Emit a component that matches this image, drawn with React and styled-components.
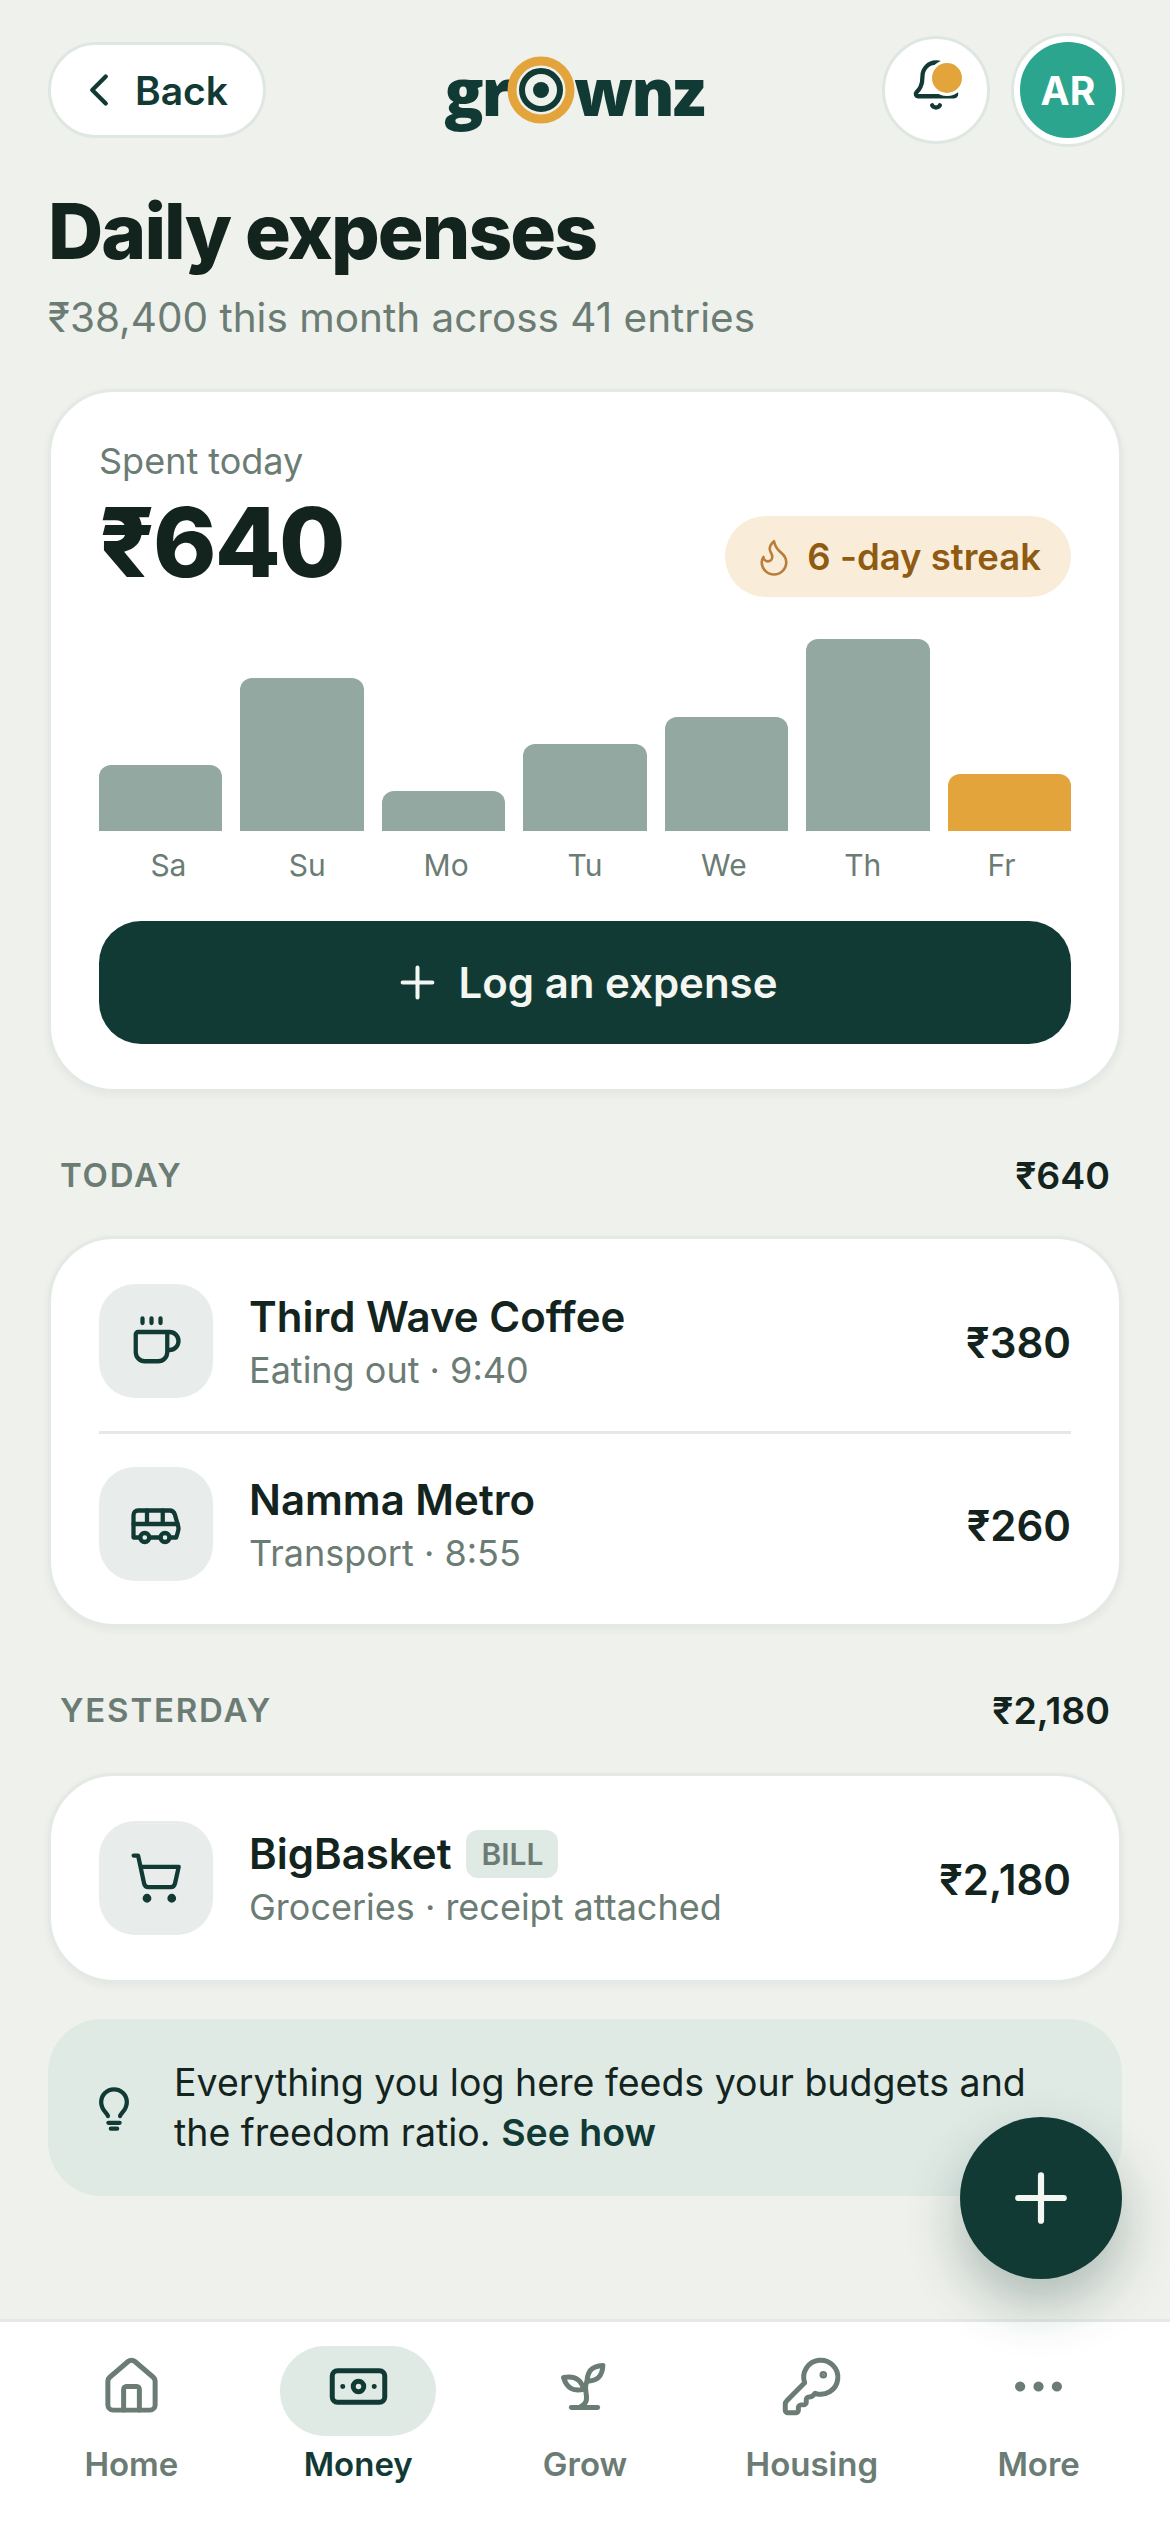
import React from "react";
import styled, { createGlobalStyle } from "styled-components";

const INK = "#13241e";
const PINE = "#123a35";
const MUTED = "#6b7c74";
const LINE = "#e4e9e5";
const MIST = "#e0eae5";

const GlobalStyle = createGlobalStyle`
  html, body {
    margin: 0;
    padding: 0;
    background: #eff1ec;
  }
  * { box-sizing: border-box; }
  body {
    font-family: Inter, "Noto Sans", sans-serif;
    color: ${INK};
  }
`;

const Svg = styled.svg`
  width: ${(p) => p.$size}px;
  height: ${(p) => p.$size}px;
  flex: none;
  display: block;
  fill: none;
  stroke: ${(p) => p.$color || PINE};
  stroke-width: ${(p) => p.$stroke || 1.9};
  stroke-linecap: round;
  stroke-linejoin: round;
`;

const Icon = ({ size, color, stroke, children }) => (
  <Svg viewBox="0 0 24 24" $size={size} $color={color} $stroke={stroke}>
    {children}
  </Svg>
);

const Page = styled.div`
  position: relative;
  width: 1170px;
  height: 2532px;
  overflow: hidden;
  display: flex;
  flex-direction: column;
`;

const Main = styled.main`
  flex: 1;
  padding: 36px 48px 0;
`;

const Header = styled.header`
  display: flex;
  align-items: center;
  justify-content: space-between;
  height: 108px;
`;

const BackButton = styled.button`
  height: 96px;
  width: 218px;
  padding: 0 0 0 21px;
  display: flex;
  align-items: center;
  gap: 9px;
  background: #fff;
  border: 3px solid #dfe7e2;
  border-radius: 48px;
  font: 600 39px Inter, sans-serif;
  color: ${PINE};
`;

const Logo = styled.div`
  display: flex;
  align-items: center;
  font: 800 65px/1 "Open Sans", sans-serif;
  letter-spacing: -2px;
  color: ${PINE};
  margin-top: 2px;
`;

const LogoRing = styled.svg`
  width: 68px;
  height: 68px;
  margin: -2px -1px 0 -3px;
  position: relative;
`;

const HeaderActions = styled.div`
  display: flex;
  align-items: center;
  gap: 24px;
`;

const BellButton = styled.div`
  position: relative;
  width: 108px;
  height: 108px;
  border-radius: 50%;
  background: #fff;
  border: 3px solid #dfe7e2;
  display: flex;
  align-items: center;
  justify-content: center;

  svg {
    margin-bottom: 11px;
  }
`;

const BellDot = styled.span`
  position: absolute;
  left: 47px;
  top: 24px;
  width: 30px;
  height: 30px;
  border-radius: 50%;
  background: #e4a43c;
  box-shadow: 0 0 0 3px #fff;
`;

const Avatar = styled.div`
  width: 108px;
  height: 108px;
  border-radius: 50%;
  background: #2ca58f;
  border: 6px solid #fff;
  box-shadow: 0 0 0 3px #dfe7e2;
  display: flex;
  align-items: center;
  justify-content: center;
  color: #fff;
  font-size: 39px;
  font-weight: 700;
`;

const Title = styled.h1`
  margin: 42px 0 0;
  font-size: 76.5px;
  line-height: 90px;
  font-weight: 800;
  letter-spacing: -1.95px;
  color: ${INK};
`;

const Subtitle = styled.p`
  margin: 15px 0 0;
  font-size: 40.5px;
  line-height: 54px;
  color: ${MUTED};
`;

const Card = styled.section`
  background: #fff;
  border: 3px solid ${LINE};
  border-radius: 66px;
  box-shadow: 0 3px 9px rgba(19, 36, 30, 0.05);
`;

const SpendCard = styled(Card)`
  margin-top: 44px;
  padding: 45px 48px 45px;
`;

const SpentLabel = styled.div`
  font-size: 36px;
  line-height: 48px;
  color: ${MUTED};
`;

const SpentRow = styled.div`
  display: flex;
  align-items: flex-end;
  justify-content: space-between;
  margin-top: 9px;
`;

const SpentValue = styled.div`
  font-size: 96px;
  line-height: 96px;
  font-weight: 800;
  letter-spacing: -1.9px;
  color: ${INK};
`;

const StreakPill = styled.div`
  height: 81px;
  padding: 0 30px 0 28px;
  margin-bottom: -7px;
  display: flex;
  align-items: center;
  gap: 12px;
  border-radius: 41px;
  background: #f9edd9;
  color: #8f5a12;
  font-size: 36.5px;
  font-weight: 600;
  white-space: pre;
`;

const Bars = styled.div`
  margin-top: 49px;
  height: 192px;
  display: flex;
  align-items: flex-end;
  gap: 18px;
`;

const Bar = styled.div`
  flex: 1;
  height: ${(p) => p.$h}px;
  border-radius: 12px 12px 0 0;
  background: ${(p) => (p.$today ? "#e4a43c" : "#94a8a2")};
`;

const DayLabels = styled.div`
  display: flex;
  margin-top: 15px;
`;

const DayLabel = styled.span`
  flex: 1;
  text-align: center;
  font-size: 30px;
  line-height: 39px;
  color: ${MUTED};
`;

const LogButton = styled.button`
  width: 100%;
  height: 123px;
  margin-top: 36px;
  border: 0;
  border-radius: 42px;
  background: ${PINE};
  color: #f4f6f2;
  display: flex;
  align-items: center;
  justify-content: center;
  gap: 15px;
  font: 600 42px Inter, sans-serif;
`;

const SectionHead = styled.div`
  display: flex;
  align-items: center;
  justify-content: space-between;
  padding: 0 12px;
  height: 48px;
  margin-top: 59px;
`;

const SectionName = styled.span`
  font-size: 33px;
  font-weight: 600;
  letter-spacing: 1.8px;
  color: ${MUTED};
`;

const SectionSum = styled.span`
  font-size: 37.5px;
  font-weight: 600;
  color: ${INK};
`;

const ListCard = styled(Card)`
  margin-top: ${(p) => p.$top}px;
  padding: 12px 48px ${(p) => p.$bottom}px;
`;

const Row = styled.div`
  display: flex;
  align-items: center;
  gap: 36px;
  padding: 33px 0;

  & + & {
    border-top: 3px solid ${LINE};
  }
`;

const IconTile = styled.div`
  width: 114px;
  height: 114px;
  flex: none;
  border-radius: 36px;
  background: #e8ecea;
  display: flex;
  align-items: center;
  justify-content: center;
`;

const RowBody = styled.div`
  flex: 1;
  padding-top: 2px;
`;

const RowName = styled.div`
  display: flex;
  align-items: center;
  gap: 15px;
  font-size: 42px;
  line-height: 54px;
  font-weight: 600;
  color: ${INK};
`;

const RowMeta = styled.div`
  margin-top: 1px;
  font-size: 36px;
  line-height: 50px;
  color: ${MUTED};
`;

const RowAmount = styled.div`
  padding-top: 2px;
  font-size: 42px;
  font-weight: 600;
  color: ${INK};
`;

const BillTag = styled.span`
  height: 48px;
  padding: 0 15px;
  border-radius: 12px;
  background: ${MIST};
  color: ${MUTED};
  font-size: 30px;
  font-weight: 600;
  display: flex;
  align-items: center;
`;

const Note = styled.div`
  margin-top: 36px;
  height: 177px;
  padding: 0 39px;
  border-radius: 54px;
  background: ${MIST};
  display: flex;
  align-items: center;
  gap: 33px;
  font-size: 37.5px;
  line-height: 50px;
  color: ${INK};
`;

const NoteLink = styled.b`
  font-weight: 600;
  color: ${PINE};
`;

const Fab = styled.button`
  position: absolute;
  right: 48px;
  top: 2117px;
  width: 162px;
  height: 162px;
  border: 0;
  border-radius: 50%;
  background: ${PINE};
  display: flex;
  align-items: center;
  justify-content: center;
  box-shadow: 0 24px 54px rgba(18, 58, 53, 0.3);
  z-index: 2;
`;

const Nav = styled.nav`
  height: 213px;
  padding: 24px 18px 0;
  background: #fff;
  border-top: 3px solid ${LINE};
  display: flex;
`;

const NavItem = styled.div`
  flex: 1;
  display: flex;
  flex-direction: column;
  align-items: center;
  color: ${(p) => (p.$active ? PINE : MUTED)};
  font-size: 33px;
  font-weight: 600;
`;

const NavIcon = styled.div`
  width: 156px;
  height: 90px;
  padding-bottom: 9px;
  border-radius: 45px;
  background: ${(p) => (p.$active ? MIST : "transparent")};
  display: flex;
  align-items: center;
  justify-content: center;
`;

const NavLabel = styled.span`
  margin-top: 4px;
  line-height: 48px;
`;

const coffee = (
  <>
    <path d="M10 2v2M14 2v2M6 2v2" />
    <path d="M16 8a1 1 0 0 1 1 1v8a4 4 0 0 1-4 4H7a4 4 0 0 1-4-4V9a1 1 0 0 1 1-1h14a4 4 0 1 1 0 8h-1" />
  </>
);

const bus = (
  <>
    <path d="M8 6v6M15 6v6M2 12h19.6" />
    <path d="M18 18h3s.5-1.7.8-2.8c.1-.4.2-.8.2-1.2 0-.4-.1-.8-.2-1.2l-1.4-5C20.1 6.8 19.1 6 18 6H4a2 2 0 0 0-2 2v10h3" />
    <circle cx="7" cy="18" r="2" />
    <path d="M9 18h5" />
    <circle cx="16" cy="18" r="2" />
  </>
);

const cart = (
  <>
    <circle cx="8" cy="21" r="1" />
    <circle cx="19" cy="21" r="1" />
    <path d="M2.05 2.05h2l2.66 12.42a2 2 0 0 0 2 1.58h9.78a2 2 0 0 0 1.95-1.57l1.65-7.43H5.12" />
  </>
);

const navItems = [
  {
    label: "Home",
    icon: (
      <>
        <path d="M15 21v-8a1 1 0 0 0-1-1h-4a1 1 0 0 0-1 1v8" />
        <path d="M3 10a2 2 0 0 1 .709-1.528l7-6a2 2 0 0 1 2.582 0l7 6A2 2 0 0 1 21 10v9a2 2 0 0 1-2 2H5a2 2 0 0 1-2-2z" />
      </>
    ),
  },
  {
    label: "Money",
    active: true,
    icon: (
      <>
        <rect x="2" y="6" width="20" height="12" rx="2" />
        <circle cx="12" cy="12" r="2" />
        <path d="M6 12h.01M18 12h.01" />
      </>
    ),
  },
  {
    label: "Grow",
    icon: (
      <>
        <path d="M7 20h10" />
        <path d="M10 20c5.5-2.5.8-6.4 3-10" />
        <path d="M9.5 9.4c1.1.8 1.8 2.2 2.3 3.7-2 .4-3.5.4-4.8-.3-1.2-.6-2.3-1.9-3-4.2 2.8-.5 4.4 0 5.5.8z" />
        <path d="M14.1 6a7 7 0 0 0-1.1 4c1.9-.1 3.3-.6 4.3-1.4 1-1 1.6-2.3 1.7-4.6-2.7.1-4 1-4.9 2z" />
      </>
    ),
  },
  {
    label: "Housing",
    icon: (
      <>
        <path d="M2.586 17.414A2 2 0 0 0 2 18.828V21a1 1 0 0 0 1 1h3a1 1 0 0 0 1-1v-1a1 1 0 0 1 1-1h1a1 1 0 0 0 1-1v-1a1 1 0 0 1 1-1h.172a2 2 0 0 0 1.414-.586l.814-.814a6.5 6.5 0 1 0-4-4z" />
        <circle cx="16.5" cy="7.5" r=".5" fill="currentColor" />
      </>
    ),
  },
  {
    label: "More",
    icon: (
      <>
        <circle cx="12" cy="12" r="1" />
        <circle cx="19" cy="12" r="1" />
        <circle cx="5" cy="12" r="1" />
      </>
    ),
  },
];

const days = [
  { name: "Sa", h: 66 },
  { name: "Su", h: 153 },
  { name: "Mo", h: 40 },
  { name: "Tu", h: 87 },
  { name: "We", h: 114 },
  { name: "Th", h: 192 },
  { name: "Fr", h: 57, today: true },
];

const ExpenseRow = ({ icon, name, tag, meta, amount }) => (
  <Row>
    <IconTile>
      <Icon size={54}>{icon}</Icon>
    </IconTile>
    <RowBody>
      <RowName>
        {name}
        {tag && <BillTag>{tag}</BillTag>}
      </RowName>
      <RowMeta>{meta}</RowMeta>
    </RowBody>
    <RowAmount>{amount}</RowAmount>
  </Row>
);

const App = () => {
  return (
    <Page>
      <GlobalStyle />
      <Main>
        <Header>
          <BackButton>
            <Icon size={54}>
              <path d="M15 18l-6-6 6-6" />
            </Icon>
            Back
          </BackButton>
          <Logo>
            gr
            <LogoRing viewBox="0 0 68 68">
              <circle cx="34" cy="34" r="33" fill="#eff1ec" />
              <circle cx="34" cy="34" r="29" fill="none" stroke="#e4a43c" strokeWidth="9" />
              <circle cx="34" cy="34" r="19" fill="none" stroke={PINE} strokeWidth="6" />
              <circle cx="34" cy="34" r="8" fill={PINE} />
            </LogoRing>
            wnz
          </Logo>
          <HeaderActions>
            <BellButton>
              <Icon size={54}>
                <path d="M10.268 21a2 2 0 0 0 3.464 0" />
                <path d="M3.262 15.326A1 1 0 0 0 4 17h16a1 1 0 0 0 .74-1.673C19.41 13.956 18 12.499 18 8A6 6 0 0 0 6 8c0 4.499-1.411 5.956-2.738 7.326" />
              </Icon>
              <BellDot />
            </BellButton>
            <Avatar>AR</Avatar>
          </HeaderActions>
        </Header>

        <Title>Daily expenses</Title>
        <Subtitle>₹38,400 this month across 41 entries</Subtitle>

        <SpendCard>
          <SpentLabel>Spent today</SpentLabel>
          <SpentRow>
            <SpentValue>₹640</SpentValue>
            <StreakPill>
              <Icon size={42} color="#b97f3a" stroke={1.5}>
                <path d="M8.5 14.5A2.5 2.5 0 0 0 11 12c0-1.38-.5-2-1-3-1.072-2.143-.224-4.054 2-6 .5 2.5 2 4.9 4 6.5 2 1.6 3 3.5 3 5.5a7 7 0 1 1-14 0c0-1.153.433-2.294 1-3a2.5 2.5 0 0 0 2.5 2.5z" />
              </Icon>
              6 -day streak
            </StreakPill>
          </SpentRow>
          <Bars>
            {days.map((d) => (
              <Bar key={d.name} $h={d.h} $today={d.today} />
            ))}
          </Bars>
          <DayLabels>
            {days.map((d) => (
              <DayLabel key={d.name}>{d.name}</DayLabel>
            ))}
          </DayLabels>
          <LogButton>
            <Icon size={51} color="#f4f6f2">
              <path d="M5 12h14M12 5v14" />
            </Icon>
            Log an expense
          </LogButton>
        </SpendCard>

        <SectionHead>
          <SectionName>TODAY</SectionName>
          <SectionSum>₹640</SectionSum>
        </SectionHead>
        <ListCard $top={37} $bottom={10}>
          <ExpenseRow icon={coffee} name="Third Wave Coffee" meta="Eating out · 9:40" amount="₹380" />
          <ExpenseRow icon={bus} name="Namma Metro" meta="Transport · 8:55" amount="₹260" />
        </ListCard>

        <SectionHead>
          <SectionName>YESTERDAY</SectionName>
          <SectionSum>₹2,180</SectionSum>
        </SectionHead>
        <ListCard $top={39} $bottom={12}>
          <ExpenseRow
            icon={cart}
            name="BigBasket"
            tag="BILL"
            meta="Groceries · receipt attached"
            amount="₹2,180"
          />
        </ListCard>

        <Note>
          <Icon size={54}>
            <path d="M9.3 15.6c-.4-1.6-3-2.6-3-6.2a5.7 5.7 0 0 1 11.4 0c0 3.6-2.6 4.6-3 6.2" />
            <path d="M9.5 18.6h5M10.6 21.2h2.8" />
          </Icon>
          <span>
            Everything you log here feeds your budgets and
            <br />
            the freedom ratio. <NoteLink>See how</NoteLink>
          </span>
        </Note>
      </Main>

      <Fab>
        <Icon size={78} color="#f4f6f2">
          <path d="M5 12h14M12 5v14" />
        </Icon>
      </Fab>

      <Nav>
        {navItems.map((item) => (
          <NavItem key={item.label} $active={item.active}>
            <NavIcon $active={item.active}>
              <Icon size={63} color={item.active ? PINE : MUTED}>
                {item.icon}
              </Icon>
            </NavIcon>
            <NavLabel>{item.label}</NavLabel>
          </NavItem>
        ))}
      </Nav>
    </Page>
  );
};

export default App;
